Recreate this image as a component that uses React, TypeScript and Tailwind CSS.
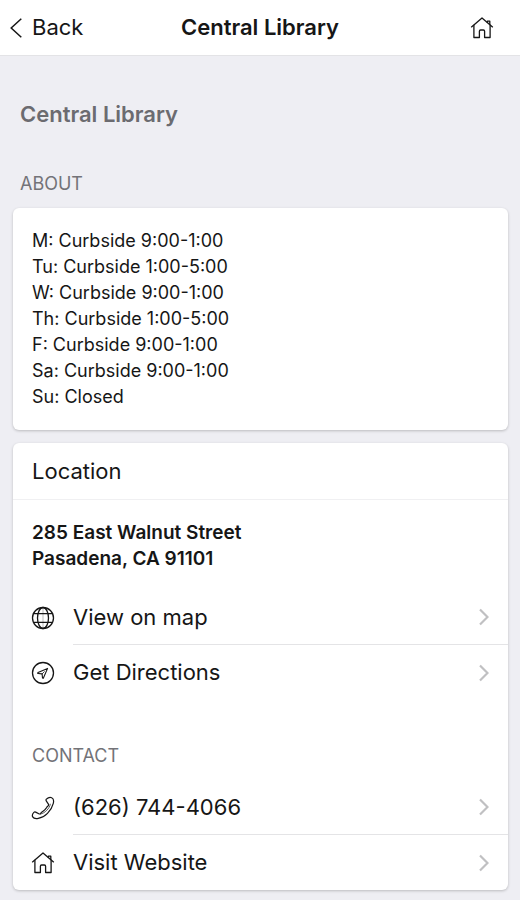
import React from 'react';

const hours = [
  'M: Curbside 9:00-1:00',
  'Tu: Curbside 1:00-5:00',
  'W: Curbside 9:00-1:00',
  'Th: Curbside 1:00-5:00',
  'F: Curbside 9:00-1:00',
  'Sa: Curbside 9:00-1:00',
  'Su: Closed',
];

type IconProps = { children: React.ReactNode };

function Icon({ children }: IconProps) {
  return (
    <svg
      viewBox="0 0 24 24"
      className="size-6 shrink-0"
      fill="none"
      stroke="currentColor"
      strokeWidth="1.3"
      strokeLinecap="round"
      strokeLinejoin="round"
      aria-hidden="true"
    >
      {children}
    </svg>
  );
}

function HomeIcon() {
  return (
    <Icon>
      <path d="M1.5 10.9 12 2l10.5 8.900" />
      <path d="M17.4 6.400V5.200h2.400v3.200" />
      <path d="M3.900 9.300v12.200h5.500v-6.300c0-.7.5-1.200 1.200-1.200h2.800c.7 0 1.200.5 1.200 1.200v6.300h5.500V9.300" />
    </Icon>
  );
}

function GlobeIcon() {
  return (
    <Icon>
      <circle cx="12" cy="12" r="10.5" />
      <ellipse cx="12" cy="12" rx="5.500" ry="10.5" />
      <path d="M2.500 7.700h19M2.500 16.300h19" />
      <path d="M12 1.500v21" strokeWidth="0.3" />
    </Icon>
  );
}

function DirectionsIcon() {
  return (
    <Icon>
      <circle cx="12" cy="12" r="10.5" />
      <path d="M16.600 7.400 7 11.600c-.5.200-.4.900.1.900l4 .4.400 4c.1.500.7.600.9.100z" strokeWidth="1.1" />
      <path d="M11.100 12.900l2.200-2.200" strokeWidth="0.8" />
    </Icon>
  );
}

function PhoneIcon() {
  return (
    <Icon>
      <path d="M15.400 3.200c1.500-1.500 3.800-2.200 5.300-1.500 1.800.8 2.200 3.200 1.600 5.700-.9 3.700-3 7.100-5.800 9.900-2.700 2.700-5.900 4.500-9.200 5.100-2.300.4-4.700.1-5.600-1.500-.7-1.400-.1-3.300 1.200-4.600.5-.5 1.200-.5 1.800-.2l3.100 1.700c.8.4 1.400.2 1.900-.5.500-.8 1.100-1.200 2-1.800 1.600-1.100 2.700-2.200 3.700-3.700.5-.8.900-1.300 1.600-1.800.7-.6.800-1.200.4-1.900l-2-3c-.5-.7-.5-1.400 0-1.900z" strokeWidth="1.2" />
      <path d="M19.300 8.200c-.3 2.300-1.700 4.300-3.600 6.200-1.800 1.800-3.900 3.200-6.200 3.600" strokeWidth="0.7" />
    </Icon>
  );
}

function Chevron() {
  return (
    <svg viewBox="0 0 10 18" className="h-[18px] w-2.5 shrink-0 text-[#c0c0c2]" fill="none" stroke="currentColor" strokeWidth="2.2" aria-hidden="true">
      <path d="M1 1.5 8.5 9 1 16.5" />
    </svg>
  );
}

type RowProps = {
  href: string;
  icon: React.ReactNode;
  label: string;
  divider?: boolean;
};

function Row({ href, icon, label, divider }: RowProps) {
  return (
    <li>
      <a href={href} className="flex items-stretch pl-[18px]">
        <span className="flex w-[42px] items-center">{icon}</span>
        <span
          className={
            divider
              ? 'flex h-[55px] flex-1 items-center justify-between border-b border-[#e4e4e6] pr-[19px]'
              : 'flex h-[55px] flex-1 items-center justify-between pr-[19px]'
          }
        >
          <span className="text-[22px]">{label}</span>
          <Chevron />
        </span>
      </a>
    </li>
  );
}

export default function App() {
  return (
    <div className="min-h-screen bg-[#eeeef3] pb-2.5 font-['Inter','Liberation_Sans',sans-serif] text-[#161616]">
      <header className="grid h-14 grid-cols-[1fr_auto_1fr] items-center border-b border-[#e3e3e6] bg-white px-2.5 text-[22px]">
        <button type="button" className="flex items-center gap-2.5 justify-self-start">
          <svg viewBox="0 0 12 20" className="h-5 w-3" fill="none" stroke="currentColor" strokeWidth="1.5" aria-hidden="true">
            <path d="M11.3.7 1.2 10l10.1 9.300" />
          </svg>
          Back
        </button>
        <h1 className="font-semibold">Central Library</h1>
        <a href="#home" aria-label="Home" className="mr-4 justify-self-end">
          <HomeIcon />
        </a>
      </header>

      <main className="pr-3 pl-[13px]">
        <h2 className="px-[7px] pt-10 text-[22px] leading-9 font-semibold text-[#6b6b70]">Central Library</h2>
        <h3 className="px-[7px] pt-10 pb-3 text-lg leading-6 text-[#737378]">ABOUT</h3>

        <section className="rounded-md bg-white px-[19px] py-5 text-lg leading-[26px] shadow-[0_1px_3px_rgba(0,0,0,0.22)]">
          {hours.map((line) => (
            <p key={line}>{line}</p>
          ))}
        </section>

        <section className="mt-[13px] rounded-md bg-white shadow-[0_1px_3px_rgba(0,0,0,0.22)]">
          <h3 className="border-b border-[#f0f0f2] px-[19px] py-3 text-[22px] leading-8">Location</h3>
          <address className="px-[19px] pt-5 pb-[18px] text-[19px] leading-[26px] font-semibold not-italic">
            285 East Walnut Street
            <br />
            Pasadena, CA 91101
          </address>
          <ul>
            <Row href="#map" icon={<GlobeIcon />} label="View on map" divider />
            <Row href="#directions" icon={<DirectionsIcon />} label="Get Directions" />
          </ul>
          <h3 className="px-[19px] pt-11 pb-3 text-lg leading-6 text-[#737378]">CONTACT</h3>
          <ul>
            <Row href="tel:6267444066" icon={<PhoneIcon />} label="(626) 744-4066" divider />
            <Row href="#website" icon={<HomeIcon />} label="Visit Website" />
          </ul>
        </section>
      </main>
    </div>
  );
}
